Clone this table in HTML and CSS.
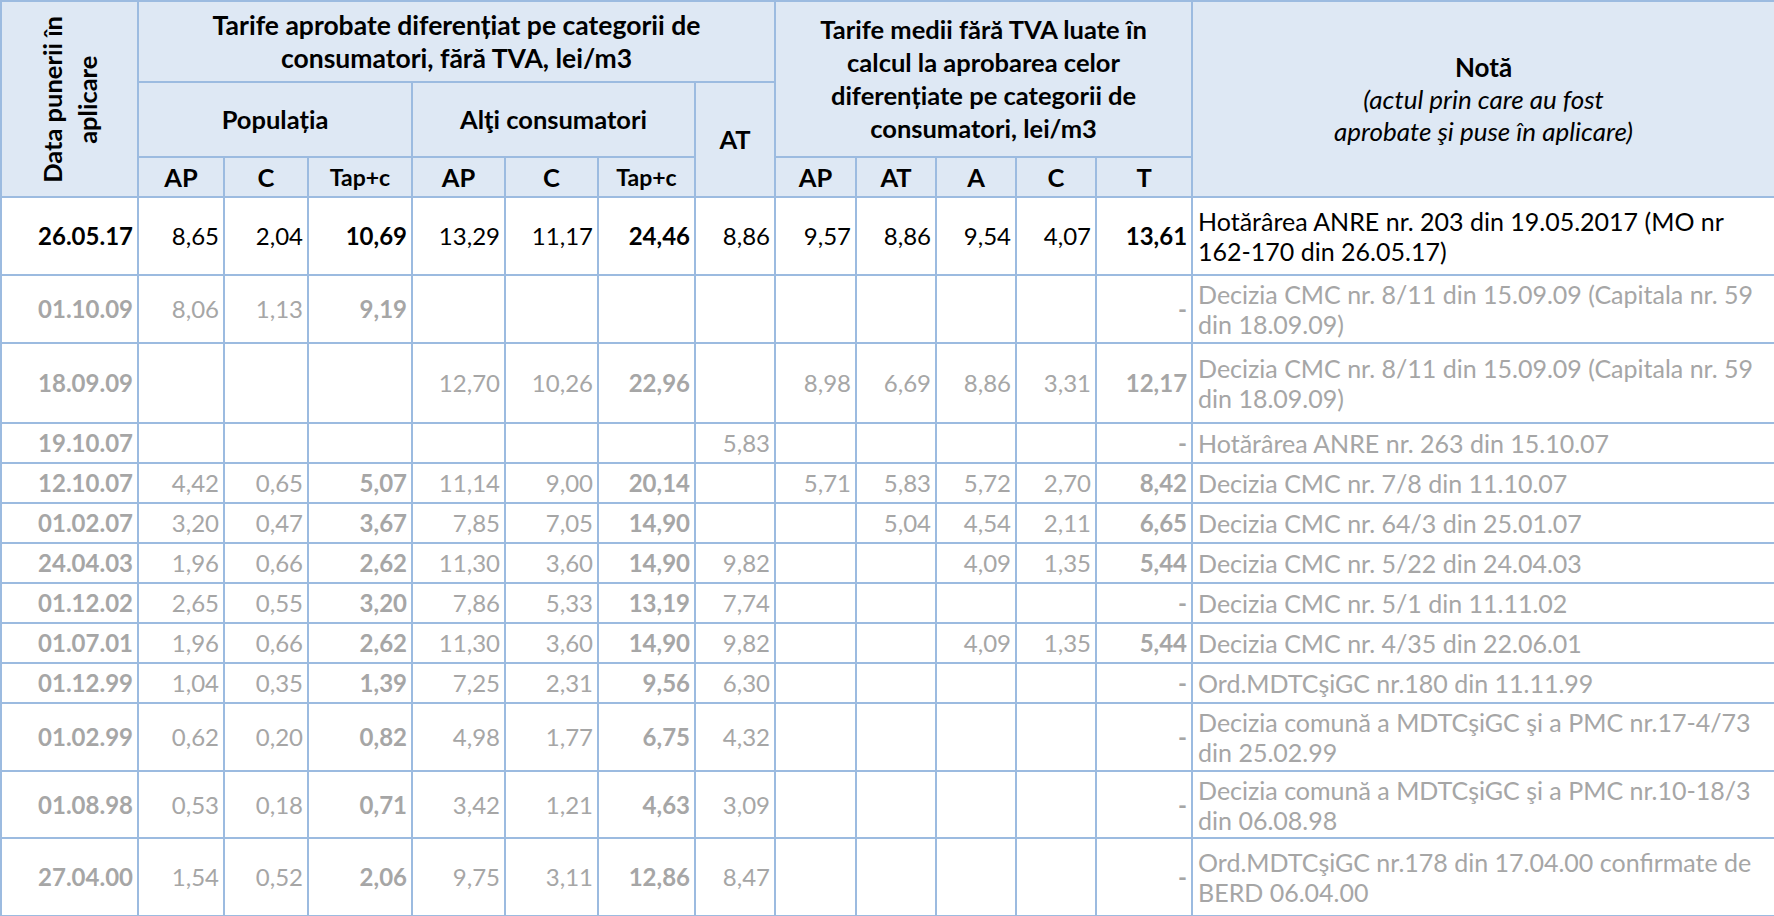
FILE: index.html
```html
<!DOCTYPE html>
<html lang="ro">
<head>
<meta charset="utf-8">
<title>Tarife</title>
<link rel="stylesheet" href="styles.css">
</head>
<body>
<table class="tbl">
  <colgroup>
    <col class="c-date"><col class="c-w86"><col class="c-w84"><col class="c-w104"><col class="c-w93"><col class="c-w93"><col class="c-w97"><col class="c-w80"><col class="c-w81"><col class="c-w80"><col class="c-w80"><col class="c-w80"><col class="c-w96"><col class="c-note">
  </colgroup>
  <thead>
    <tr class="h1">
      <th rowspan="3" class="rot-cell"><div class="rot">Data punerii în<br>aplicare</div></th>
      <th colspan="7" class="big">Tarife aprobate diferențiat pe categorii de<br>consumatori, fără TVA, lei/m3</th>
      <th colspan="5" rowspan="2">Tarife medii fără TVA luate în<br>calcul la aprobarea celor<br>diferențiate pe categorii de<br>consumatori, lei/m3</th>
      <th rowspan="3" class="nota">Notă<br><i>(actul prin care au fost<br>aprobate şi puse în aplicare)</i></th>
    </tr>
    <tr class="h2">
      <th colspan="3">Populația</th>
      <th colspan="3">Alţi consumatori</th>
      <th rowspan="2">AT</th>
    </tr>
    <tr class="h3">
      <th>AP</th><th>C</th><th class="sm">Tap+c</th>
      <th>AP</th><th>C</th><th class="sm">Tap+c</th>
      <th>AP</th><th>AT</th><th>A</th><th>C</th><th>T</th>
    </tr>
  </thead>
  <tbody>
    <tr class="cur r78">
      <td class="b">26.05.17</td><td>8,65</td><td>2,04</td><td class="b">10,69</td><td>13,29</td><td>11,17</td><td class="b">24,46</td><td>8,86</td><td>9,57</td><td>8,86</td><td>9,54</td><td>4,07</td><td class="b">13,61</td>
      <td class="note">Hotărârea ANRE nr. 203 din 19.05.2017 (MO nr<br>162-170 din 26.05.17)</td>
    </tr>
    <tr class="old r68">
      <td class="b">01.10.09</td><td>8,06</td><td>1,13</td><td class="b">9,19</td><td></td><td></td><td></td><td></td><td></td><td></td><td></td><td></td><td class="b">-</td>
      <td class="note">Decizia CMC nr. 8/11 din 15.09.09 (Capitala nr. 59<br>din 18.09.09)</td>
    </tr>
    <tr class="old r80">
      <td class="b">18.09.09</td><td></td><td></td><td></td><td>12,70</td><td>10,26</td><td class="b">22,96</td><td></td><td>8,98</td><td>6,69</td><td>8,86</td><td>3,31</td><td class="b">12,17</td>
      <td class="note">Decizia CMC nr. 8/11 din 15.09.09 (Capitala nr. 59<br>din 18.09.09)</td>
    </tr>
    <tr class="old r40">
      <td class="b">19.10.07</td><td></td><td></td><td></td><td></td><td></td><td></td><td>5,83</td><td></td><td></td><td></td><td></td><td class="b">-</td>
      <td class="note">Hotărârea ANRE nr. 263 din 15.10.07</td>
    </tr>
    <tr class="old r40">
      <td class="b">12.10.07</td><td>4,42</td><td>0,65</td><td class="b">5,07</td><td>11,14</td><td>9,00</td><td class="b">20,14</td><td></td><td>5,71</td><td>5,83</td><td>5,72</td><td>2,70</td><td class="b">8,42</td>
      <td class="note">Decizia CMC nr. 7/8 din 11.10.07</td>
    </tr>
    <tr class="old r40">
      <td class="b">01.02.07</td><td>3,20</td><td>0,47</td><td class="b">3,67</td><td>7,85</td><td>7,05</td><td class="b">14,90</td><td></td><td></td><td>5,04</td><td>4,54</td><td>2,11</td><td class="b">6,65</td>
      <td class="note">Decizia CMC nr. 64/3 din 25.01.07</td>
    </tr>
    <tr class="old r40">
      <td class="b">24.04.03</td><td>1,96</td><td>0,66</td><td class="b">2,62</td><td>11,30</td><td>3,60</td><td class="b">14,90</td><td>9,82</td><td></td><td></td><td>4,09</td><td>1,35</td><td class="b">5,44</td>
      <td class="note">Decizia CMC nr. 5/22 din 24.04.03</td>
    </tr>
    <tr class="old r40">
      <td class="b">01.12.02</td><td>2,65</td><td>0,55</td><td class="b">3,20</td><td>7,86</td><td>5,33</td><td class="b">13,19</td><td>7,74</td><td></td><td></td><td></td><td></td><td class="b">-</td>
      <td class="note">Decizia CMC nr. 5/1 din 11.11.02</td>
    </tr>
    <tr class="old r40">
      <td class="b">01.07.01</td><td>1,96</td><td>0,66</td><td class="b">2,62</td><td>11,30</td><td>3,60</td><td class="b">14,90</td><td>9,82</td><td></td><td></td><td>4,09</td><td>1,35</td><td class="b">5,44</td>
      <td class="note">Decizia CMC nr. 4/35 din 22.06.01</td>
    </tr>
    <tr class="old r40">
      <td class="b">01.12.99</td><td>1,04</td><td>0,35</td><td class="b">1,39</td><td>7,25</td><td>2,31</td><td class="b">9,56</td><td>6,30</td><td></td><td></td><td></td><td></td><td class="b">-</td>
      <td class="note">Ord.MDTCşiGC nr.180 din 11.11.99</td>
    </tr>
    <tr class="old r68">
      <td class="b">01.02.99</td><td>0,62</td><td>0,20</td><td class="b">0,82</td><td>4,98</td><td>1,77</td><td class="b">6,75</td><td>4,32</td><td></td><td></td><td></td><td></td><td class="b">-</td>
      <td class="note">Decizia comună a MDTCşiGC şi a PMC nr.17-4/73<br>din 25.02.99</td>
    </tr>
    <tr class="old r67">
      <td class="b">01.08.98</td><td>0,53</td><td>0,18</td><td class="b">0,71</td><td>3,42</td><td>1,21</td><td class="b">4,63</td><td>3,09</td><td></td><td></td><td></td><td></td><td class="b">-</td>
      <td class="note">Decizia comună a MDTCşiGC şi a PMC nr.10-18/3<br>din 06.08.98</td>
    </tr>
    <tr class="old r78">
      <td class="b">27.04.00</td><td>1,54</td><td>0,52</td><td class="b">2,06</td><td>9,75</td><td>3,11</td><td class="b">12,86</td><td>8,47</td><td></td><td></td><td></td><td></td><td class="b">-</td>
      <td class="note">Ord.MDTCşiGC nr.178 din 17.04.00 confirmate de<br>BERD 06.04.00</td>
    </tr>
  </tbody>
</table>
</body>
</html>
```

FILE: styles.css
```css
html, body {
  margin: 0;
  padding: 0;
  overflow: hidden;
  background: #ffffff;
}

.tbl {
  border-collapse: collapse;
  table-layout: fixed;
  width: 1774px;
  font-family: Lato, "Open Sans", "Liberation Sans", sans-serif;
  font-size: 24px;
  color: #000;
}

.c-date { width: 137px; }
.c-w86 { width: 86px; }
.c-w84 { width: 84px; }
.c-w104 { width: 104px; }
.c-w93 { width: 93px; }
.c-w97 { width: 97px; }
.c-w80 { width: 80px; }
.c-w81 { width: 81px; }
.c-w96 { width: 96px; }
.c-note { width: 583px; }

.tbl th,
.tbl td {
  border: 2px solid #9cbbe0;
  padding: 0 4px;
  vertical-align: middle;
  overflow: hidden;
}

.tbl th {
  background: #dee8f4;
  font-weight: 700;
  font-size: 25.5px;
  text-align: center;
  line-height: 33px;
}

.tbl th.big { font-size: 26.5px; }

.h1 { height: 81px; }
.h2 { height: 75px; }
.h3 { height: 40px; }

.tbl th.sm { font-size: 23px; }

.rot-cell { padding: 0; }
.rot {
  writing-mode: vertical-rl;
  transform: rotate(180deg);
  margin: 0 auto;
  line-height: 35px;
  text-align: center;
}

.tbl th.nota {
  font-size: 26px;
  line-height: 32px;
}

.nota i {
  font-weight: 400;
}

.tbl td {
  text-align: right;
  line-height: 30px;
}

.tbl td.b { font-weight: 700; }

.tbl td.note {
  text-align: left;
  white-space: nowrap;
  padding-left: 5px;
  font-size: 25px;
}

.cur td { color: #000; }
.old td { color: #a6a6a6; }

.r40 { height: 40px; }
.r67 { height: 67px; }
.r68 { height: 68px; }
.r78 { height: 78px; }
.r80 { height: 80px; }
```
